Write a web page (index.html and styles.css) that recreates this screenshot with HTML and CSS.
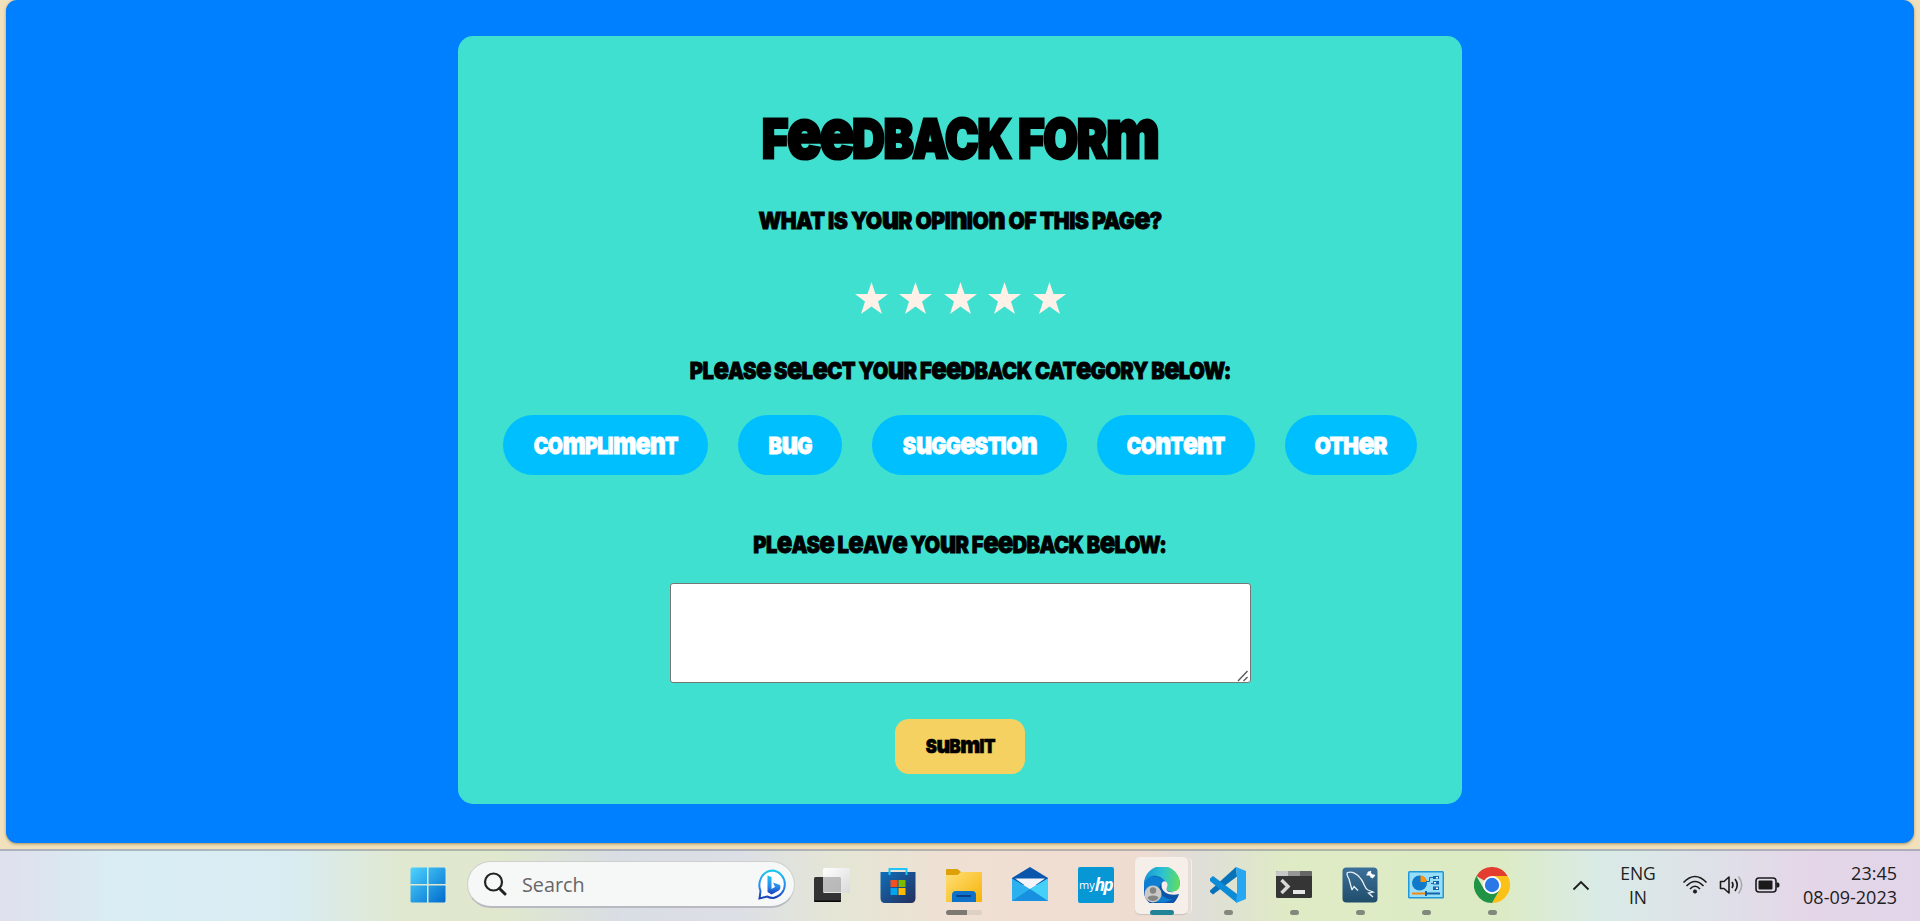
FILE: index.html
```
<!DOCTYPE html>
<html lang="en">
<head>
<meta charset="utf-8">
<title>Feedback Form</title>
<link rel="stylesheet" href="styles.css">
</head>
<body>
<div class="window">
  <main class="page">
    <form class="card">
      <h1 class="title"><span class="lettering">F<i>ee</i>DBACK FOR<i>m</i></span></h1>
      <h2 class="question q-opinion"><span class="lettering">WHAT IS YO<i>u</i>R OPI<i>n</i>IO<i>n</i> OF THIS PAG<i>e</i>?</span></h2>
      <div class="stars">
        <svg viewBox="0 0 33 32"><path d="M16.500 0 20.500 12H33L23 19.600 27 32 16.500 24.500 6 32 10 19.600 0 12H12.500Z"/></svg>
        <svg viewBox="0 0 33 32"><path d="M16.500 0 20.500 12H33L23 19.600 27 32 16.500 24.500 6 32 10 19.600 0 12H12.500Z"/></svg>
        <svg viewBox="0 0 33 32"><path d="M16.500 0 20.500 12H33L23 19.600 27 32 16.500 24.500 6 32 10 19.600 0 12H12.500Z"/></svg>
        <svg viewBox="0 0 33 32"><path d="M16.500 0 20.500 12H33L23 19.600 27 32 16.500 24.500 6 32 10 19.600 0 12H12.500Z"/></svg>
        <svg viewBox="0 0 33 32"><path d="M16.500 0 20.500 12H33L23 19.600 27 32 16.500 24.500 6 32 10 19.600 0 12H12.500Z"/></svg>
      </div>
      <h2 class="question q-category"><span class="lettering">PL<i>e</i>AS<i>e</i> S<i>e</i>L<i>e</i>CT YO<i>u</i>R F<i>ee</i>DBACK CAT<i>e</i>GORY B<i>e</i>LOW:</span></h2>
      <div class="categories">
        <span class="pill compliment"><span class="lettering">CO<i>m</i>PLI<i>men</i>T</span></span>
        <span class="pill bug"><span class="lettering">B<i>u</i>G</span></span>
        <span class="pill suggestion"><span class="lettering">S<i>u</i>GG<i>e</i>STIO<i>n</i></span></span>
        <span class="pill content"><span class="lettering">CO<i>n</i>T<i>en</i>T</span></span>
        <span class="pill other"><span class="lettering">OTH<i>e</i>R</span></span>
      </div>
      <h2 class="question q-leave"><span class="lettering">PL<i>e</i>AS<i>e</i> L<i>e</i>AV<i>e</i> YO<i>u</i>R F<i>ee</i>DBACK B<i>e</i>LOW:</span></h2>
      <div class="comment-box">
        <textarea class="comment"></textarea>
        <svg class="grip" width="12" height="12" viewBox="0 0 12 12"><path d="M1 11 10.500 1M6.500 11 10.500 7" fill="none" stroke="#555" stroke-width="1.300"/></svg>
      </div>
      <button class="submit" type="button"><span class="lettering">S<i>u</i>B<i>m</i>IT</span></button>
    </form>
  </main>
</div>
<footer class="taskbar">
  <div class="start"><svg width="36" height="36" viewBox="0 0 36 36">
    <defs><linearGradient id="win" x1="0" y1="0" x2="36" y2="36" gradientUnits="userSpaceOnUse"><stop stop-color="#4fd6ff"/><stop offset="1" stop-color="#0069cc"/></linearGradient></defs>
    <path fill="url(#win)" d="M2 .5H17V17H.5V2Q.5 .5 2 .5ZM18.500 .5H34Q35.500 .5 35.500 2V17H18.500ZM.5 18.500H17V35.500H2Q.5 35.500 .5 34ZM18.500 18.500H35.500V34Q35.500 35.500 34 35.500H18.500Z"/></svg></div>
  <div class="search">
    <svg width="24" height="24" viewBox="0 0 24 24" fill="none" stroke="#222"><circle cx="10.500" cy="10" r="8.500" stroke-width="2.200"/><path d="M16.500 16.500 22 22" stroke-width="3" stroke-linecap="round"/></svg>
    <span class="search-label">Search</span>
    <svg width="31" height="31" viewBox="0 0 31 31">
      <defs><linearGradient id="bing" x1="0" y1="0" x2="0" y2="1"><stop stop-color="#19c6ee"/><stop offset=".6" stop-color="#2b86ee"/><stop offset="1" stop-color="#153eb5"/></linearGradient></defs>
      <path d="M1.500 29.500 2.500 22C-1 13 4 1.500 15.500 1.500A14 14 0 0 1 15.500 29C12 29 10 28 9 27.500Z" fill="#fff" stroke="url(#bing)" stroke-width="2"/>
      <path d="M9.500 6.500 13.500 8V20L17 18 15 13.500 22 16Q23.500 20 20 22L13.500 25.500 9.500 23Z" fill="url(#bing)"/></svg>
  </div>
  <nav class="apps">
    <div class="app"><svg width="36" height="36" viewBox="0 0 36 36">
      <defs><linearGradient id="tv" x1="0" y1="0" x2="1" y2="1"><stop stop-color="#fff"/><stop offset="1" stop-color="#d9d9d9"/></linearGradient></defs>
      <rect x="0" y="10" width="27" height="25" rx="1.500" fill="#333"/><path d="M0 33.500H27V34Q27 35 25.500 35H1.500Q0 35 0 34Z" fill="#080808"/><rect x="9" y="1" width="27" height="25" rx="1.500" fill="url(#tv)"/><path d="M9 10H25.500Q27 10 27 11.500V25H9Z" fill="#aaa" opacity=".75"/></svg></div>
    <div class="app"><svg width="36" height="36" viewBox="0 0 36 36">
      <defs><linearGradient id="store" x1="0" y1="0" x2="1" y2="1"><stop stop-color="#0f70bb"/><stop offset="1" stop-color="#252d5c"/></linearGradient></defs>
      <path d="M.5 5H35.500V31Q35.500 36 31 36H5Q.5 36 .5 31Z" fill="url(#store)"/><path d="M9.500 8V2H26.500V8" fill="none" stroke="#22c5fa" stroke-width="2"/><path fill="#f25022" d="M10.500 13H17.500V20H10.500Z"/><path fill="#7fba00" d="M18.500 13H25.500V20H18.500Z"/><path fill="#00a4ef" d="M10.500 21H17.500V28H10.500Z"/><path fill="#ffb900" d="M18.500 21H25.500V28H18.500Z"/></svg></div>
    <div class="app"><svg width="36" height="36" viewBox="0 0 36 36">
      <defs><linearGradient id="folder" x1="0" y1="0" x2="1" y2="1"><stop stop-color="#ffdf78"/><stop offset="1" stop-color="#f6b306"/></linearGradient></defs>
      <path d="M0 3Q0 2 1 2H11.500L15 5H34.500Q36 5 36 7V12H0Z" fill="#dda006"/><path d="M0 8H11.500L15 5H36V34Q36 35 35 35H1Q0 35 0 34Z" fill="url(#folder)"/><path d="M6 35V28Q6 24 10 24H26Q30 24 30 28V35Z" fill="#0f72ca"/><path d="M10.500 29H25" stroke="#0b3e83" stroke-width="2"/></svg><b class="running folder-run"></b></div>
    <div class="app"><svg width="36" height="36" viewBox="0 0 36 36">
      <path d="M0 11 18 0 36 11V18H0Z" fill="#0a56ad"/><path d="M0 11.500 18 22 36 11.500V34H0Z" fill="#2bb1ef"/><path d="M3 11.500H33L18 22Z" fill="#f3f5f8"/><path d="M36 11.500 18 22 36 34Z" fill="#45d0f8"/><path d="M0 34 18 22 36 34Z" fill="#1690df"/></svg></div>
    <div class="app"><span class="hp"><small>my</small><em>hp</em></span></div>
    <div class="app app-active"><svg width="36" height="36" viewBox="0 0 36 36">
      <defs><linearGradient id="edge" x1="0" y1=".4" x2="1" y2=".5"><stop stop-color="#1597d8"/><stop offset=".5" stop-color="#2cc3d2"/><stop offset="1" stop-color="#61dc60"/></linearGradient></defs>
      <path d="M0 18A18 18 0 0 1 36 18L26 24 35 27A18 18 0 0 1 0 18Z" fill="#0b55a8"/>
      <path d="M0 18C1 9 8 8 14 10 20 12 22 14 19 16 15 17 14 22 17 27 20 31 25 33 29 32 14 41 0 32 0 18Z" fill="#0c7fd2"/>
      <path d="M0 17A18 18 0 0 1 36 17C36 23 31 25.500 26 24.500 22 24 22 22 22.500 20 23 15 19 10 12 9 6 8 2 12 0 17Z" fill="url(#edge)"/>
      <path d="M17.500 18C17.500 13 23.500 13 23.500 18 23 21 22 22 23 23.500 25 26 32 26 36 22L35 27C28 29 17.500 27 17.500 18Z" fill="#f6eee9"/>
      <circle cx="9" cy="27" r="8.500" fill="#c9c9c7"/><circle cx="9" cy="23.500" r="3.200" fill="#858583"/><path d="M3.500 31Q4 28.500 9 28.500T14.500 31Q12.500 34 9 34T3.500 31Z" fill="#858583"/></svg><b class="running active-run"></b></div>
    <div class="app"><svg width="36" height="36" viewBox="0 0 36 36">
      <path d="M26 0 0 23.500V25L3 27.500 27 9.500Z" fill="#0872b9"/><path d="M0 11.500 3 9 27 27V36L0 14Z" fill="#0c8bd7"/><path d="M26 0 36 4V32L26 36 27 27V9Z" fill="#27a6f2"/></svg><b class="running"></b></div>
    <div class="app"><svg width="36" height="36" viewBox="0 0 36 36">
      <rect y="4" width="36" height="27" rx="1.500" fill="#353535"/><path d="M0 9V5.500Q0 4 1.500 4H12V9Z" fill="#c7c7c7"/><path d="M12 4H24V9H12Z" fill="#969696"/><path d="M24 4H34.500Q36 4 36 5.500V9H24Z" fill="#666"/><path d="M5.500 13 12 19.500 5.500 26" fill="none" stroke="#d8d8d8" stroke-width="3.400"/><path d="M17 23H29V27H17Z" fill="#e5e5e5"/></svg><b class="running"></b></div>
    <div class="app"><svg width="36" height="36" viewBox="0 0 36 36">
      <defs><linearGradient id="sql" x1="0" y1="0" x2="0" y2="1"><stop stop-color="#3d7099"/><stop offset="1" stop-color="#204d6b"/></linearGradient></defs>
      <rect x=".5" y=".5" width="35" height="35" rx="4" fill="url(#sql)"/><path d="M10 23 7 12Q4 7 5.500 5.500C10 4 16 7 19 12 23 17 22 21 26 23L31 25 26.500 26 31 30M10 23 12 19.500 16 23.500" fill="none" stroke="#e9f0f4" stroke-width="1.300"/><path d="M26 5 31.500 10.500" stroke="#fff" stroke-width="3"/><path d="M24.500 7.500Q28 9 28.500 4M29 10.500Q29.500 7.500 33 8.500" stroke="#fff" stroke-width="1.500" fill="none"/></svg><b class="running"></b></div>
    <div class="app"><svg width="36" height="36" viewBox="0 0 36 36">
      <rect y="4" width="36" height="27.500" rx="1.500" fill="#2197d7"/><rect x="1.500" y="5.500" width="33" height="24.500" fill="#96def9"/><circle cx="11.500" cy="16" r="7.500" fill="#1179c9"/><path d="M12.500 8.500A7 7 0 0 1 19 15H12.500Z" fill="#fa930b"/><path d="M18 14.500H21.500V10.500H25M27 16.500H23" fill="none" stroke="#1667a7"/><path d="M25 9H31V12H25ZM25 14H31V17.500H25ZM25 19.500H31V23H25Z" fill="#1667a7"/><path d="M28 10H30V11.500H28ZM26 15H28V16.500H26ZM28 20.500H30V22H28Z" fill="#fff"/><path d="M4 26.500H17" stroke="#f18911" stroke-width="2"/><path d="M19 26.500H32M18 24V29" stroke="#1364a9" stroke-width="2"/></svg><b class="running"></b></div>
    <div class="app"><svg width="36" height="36" viewBox="0 0 36 36">
      <path d="M18 18 2.400 9A18 18 0 0 1 33.600 9Z" fill="#e33d30"/><path d="M18 9H33.600A18 18 0 0 1 18 36L25.800 22.500Z" fill="#fcc116"/><path d="M2.400 9 10.200 22.500Q18 31 25.800 22.500L18 36A18 18 0 0 1 2.400 9Z" fill="#219344"/><circle cx="18" cy="18" r="9" fill="#fff"/><circle cx="18" cy="18" r="7.200" fill="#2a78e8"/></svg><b class="running"></b></div>
  </nav>
  <div class="tray">
    <svg class="chevron" width="18" height="11" viewBox="0 0 18 11"><path d="M1.500 9.500 9 2 16.500 9.500" fill="none" stroke="#1c1c1c" stroke-width="1.800"/></svg>
    <div class="language">ENG<br>IN</div>
    <div class="status">
      <svg width="26" height="20" viewBox="0 0 26 20" fill="none" stroke="#1b1b1b" stroke-width="1.600"><path d="M1.500 7.500Q13-4.500 24.500 7.500M4.500 11Q13 2 21.500 11M8 14Q13 8.500 18 14"/><circle cx="13" cy="16.500" r="1.600" fill="#1b1b1b" stroke-width="1"/></svg>
      <svg width="25" height="20" viewBox="0 0 25 20" fill="none" stroke="#1b1b1b" stroke-width="1.600"><path d="M1.500 6.500H5L10 2V18L5 13.500H1.500Z" stroke-linejoin="round"/><path d="M13 7Q15 10 13 13M16 4Q20.500 10 16 16"/><path d="M19.500 1.500Q26 10 19.500 18.500" stroke="#aaa9ae"/></svg>
      <svg width="25" height="16" viewBox="0 0 25 16"><rect x="1" y="1" width="20" height="14" rx="3" fill="none" stroke="#1b1b1b" stroke-width="1.600"/><rect x="3.500" y="3.500" width="14" height="9" rx="1" fill="#1b1b1b"/><path d="M21.500 5.500H23Q24.500 5.500 24.500 8T23 10.500H21.500Z" fill="#1b1b1b"/></svg>
    </div>
    <div class="clock">23:45<br>08-09-2023</div>
  </div>
</footer>
</body>
</html>
```
FILE: styles.css
```
* { box-sizing: border-box; }
html { height: 921px; overflow: hidden; }
body { margin: 0; width: 1920px; height: 921px; overflow: hidden; display: flex; flex-direction: column; background: #f0e0bb; font-family: "Open Sans", "Noto Sans", sans-serif; }
svg { display: block; flex: none; }

.window { height: 849px; padding: 0 6px 6px; flex: none; }
.page { height: 843px; padding-top: 36px; border-radius: 11px; background: #0080ff; box-shadow: 0 1px 3px #a9905f; }
.card { width: 1004px; height: 768px; margin: 0 auto; padding-top: 71px; border-radius: 15px; background: #40e0d0; display: flex; flex-direction: column; align-items: center; }

/* Chunky all-height lettering: lowercase shapes are enlarged to cap height */
.lettering { display: inline-block; white-space: nowrap; font-family: Inter, sans-serif; font-weight: 900; transform: scaleX(var(--squeeze, 1)); -webkit-text-stroke: .035em currentColor; letter-spacing: -.025em; }
.lettering i { font-style: normal; font-size: 1.270em; line-height: 0; letter-spacing: -.035em; }
.title { margin: 0; height: 60px; line-height: 60px; font-size: 54px; --squeeze: .832; }
.title .lettering { -webkit-text-stroke-width: .055em; }
.question { margin: 0; height: 30px; line-height: 30px; font-size: 23.500px; }
.q-opinion { margin-top: 38px; --squeeze: .9; }
.stars { margin-top: 47px; display: flex; gap: 11.500px; }
.stars svg { width: 33px; height: 32px; fill: #fff1e8; }
.q-category { margin-top: 41px; --squeeze: .858; }
.categories { margin-top: 30px; display: flex; gap: 30px; }
.pill { height: 60px; border-radius: 30px; background: #00bfff; color: #fff; font-size: 23.500px; display: flex; align-items: center; justify-content: center; }
.compliment { width: 205px; --squeeze: .83; }
.bug { width: 104px; --squeeze: .86; }
.suggestion { width: 195px; --squeeze: .85; }
.content { width: 158px; --squeeze: .82; }
.other { width: 132px; --squeeze: .885; }
.q-leave { margin-top: 54px; --squeeze: .858; }
.comment-box { position: relative; width: 581px; height: 100px; margin-top: 24px; }
.comment { display: block; width: 100%; height: 100%; margin: 0; border: 1px solid #767676; border-radius: 3px; background: #fff; resize: none; }
.grip { position: absolute; right: 2px; bottom: 1px; }
.submit { width: 130px; height: 55px; margin-top: 36px; padding: 0; border: 0; border-radius: 14px; background: #f5d161; color: #000; font-size: 19px; display: flex; align-items: center; justify-content: center; --squeeze: .88; }

.taskbar { height: 72px; flex: none; border-top: 2px solid rgba(125, 130, 135, .5); display: flex; align-items: center; background: linear-gradient(90deg, #dfe0ed 0, #d9edf4 120px, #d8ecf2 290px, #e0e8d0 400px, #dfe8cd 500px, #d9dde4 620px, #dcdfe5 740px, #e5e6d5 840px, #f0dfd3 970px, #efdcd1 1140px, #dfded8 1200px, #dfebc4 1290px, #dcebc4 1500px, #d9ebe7 1600px, #dee2e8 1700px, #e4d6e8 1810px, #e3d5e9 1920px); background-origin: border-box; }
.start { width: 36px; margin-left: 410px; }
.search { width: 328px; height: 47px; margin-left: 21px; margin-top: -3px; padding: 0 5px 0 15px; border: 1px solid #cdd0cc; border-bottom: 2px solid #b7bbc1; border-radius: 24px; background: #f6f7f7; display: flex; align-items: center; }
.search-label { flex: 1; margin-left: 15px; color: #666; font-size: 19.800px; }
.start, .apps { position: relative; top: -1px; }
.apps { display: flex; margin-left: 3.500px; }
.app { position: relative; width: 66px; height: 58px; display: flex; align-items: center; justify-content: center; }
.app-active::before { content: ""; position: absolute; left: 6px; top: 1px; width: 53px; height: 57px; border-radius: 5px; background: #f6eee9; box-shadow: 4px 0 0 -1px #e4ddd8, 5px 0 0 -1px #f6eee9, 0 1px 1px #c9c0ba; }
.app-active svg { position: relative; }
.running { position: absolute; bottom: -1px; left: 29px; width: 9px; height: 5px; border-radius: 3px; background: #83887d; }
.folder-run { left: 15px; width: 36px; background: linear-gradient(90deg, #7d7872 21px, #ddd0c5 21px); }
.active-run { left: 21px; width: 24px; background: #218395; }
.hp { width: 36px; height: 36px; border-radius: 2px; background: #0797d5; color: #fff; display: flex; align-items: center; justify-content: center; line-height: 36px; }
.hp small { font-size: 11px; }
.hp em { font: italic 700 17px/36px "Open Sans", sans-serif; letter-spacing: -1.500px; }
.tray { position: relative; top: -1px; margin-left: auto; display: flex; align-items: center; padding-right: 23px; color: #202020; font-size: 18px; line-height: 24px; }
.language { width: 40px; margin-left: 28px; text-align: center; font-size: 17.500px; }
.status { display: flex; align-items: center; gap: 11px; margin-left: 24px; }
.clock { width: 96px; margin-left: 21px; text-align: right; white-space: nowrap; }
```
